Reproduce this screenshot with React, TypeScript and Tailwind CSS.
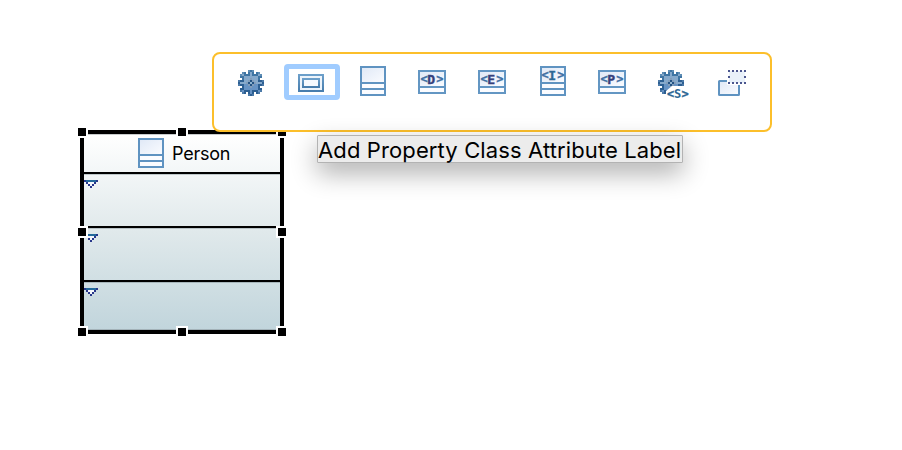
import type { ReactNode } from 'react';

const GEAR = [
  '.....s#s.....',
  '..s#.#o#.#s..',
  '.so###o###os.',
  '.##ooooooo##.',
  '..#ooolooo#..',
  's##oolmloo##s',
  '#ooolm.mlooo#',
  's##oolmloo##s',
  '..#ooolooo#..',
  '.##ooooooo##.',
  '.so###o###os.',
  '..s#.#o#.#s..',
  '.....s#s.....',
];

function gearFill(c: string, row: number) {
  if (c === '#') return row < 5 ? '#3f75a3' : '#2d5f92';
  if (c === 's') return row < 5 ? '#5d8db5' : '#4c7aa8';
  if (c === 'm') return '#235384';
  if (c === 'l') return '#829dba';
  if (c === '.') return '#8fb4d2';
  return row < 7 ? '#86a9cb' : '#6793c4';
}

function GearPixels() {
  return (
    <g shapeRendering="crispEdges">
      {GEAR.flatMap((line, r) =>
        line.split('').map((c, k) =>
          c === '.' && !(r === 6 && k === 6) ? null : (
            <rect key={`${r}-${k}`} x={2 + k * 2} y={4 + r * 2} width="2" height="2" fill={gearFill(c, r)} />
          ),
        ),
      )}
    </g>
  );
}

function Glyph({ children }: { children: ReactNode }) {
  return (
    <svg className="block h-8 w-8 shrink-0 overflow-visible" viewBox="0 0 32 32">
      <defs>
        <linearGradient id="pane" x1="0" y1="0" x2="1" y2="1">
          <stop offset="0" stopColor="#dfe8f6" />
          <stop offset="1" stopColor="#fbfcff" />
        </linearGradient>
        <linearGradient id="frame" x1="0" y1="0" x2="0" y2="1">
          <stop offset="0" stopColor="#6c9fca" />
          <stop offset="1" stopColor="#477dad" />
        </linearGradient>
      </defs>
      {children}
    </svg>
  );
}

function Tag({ letter, y, color }: { letter: string; y: number; color: string }) {
  return (
    <text
      x="4.6 11.3 20.2"
      y={y}
      fontSize="13.5"
      fontWeight="700"
      fill={color}
      className="font-['DejaVu_Sans','Liberation_Sans',sans-serif]"
    >
      <tspan fontSize="12" fill="#3f6fa3" stroke="#3f6fa3" strokeWidth=".3" className="font-['DejaVu_Sans_Mono',monospace]" dy="-.8">{'<'}</tspan>
      <tspan fontSize="13" dy=".8" className="font-['DejaVu_Sans_Mono',monospace]" stroke={color} strokeWidth=".4">{letter}</tspan>
      <tspan fontSize="12" fill="#3f6fa3" stroke="#3f6fa3" strokeWidth=".3" className="font-['DejaVu_Sans_Mono',monospace]" dy="-.8">{'>'}</tspan>
    </text>
  );
}

function ClassGlyph({ letter }: { letter?: string }) {
  return (
    <Glyph>
      <rect x="5" y="1" width="24" height="28" fill="#fbfcff" />
      <rect x="5" y="1" width="24" height="16" fill="url(#pane)" />
      <path d="M5 1H29V29H5ZM5 17H29M5 23H29" fill="none" stroke="#5f93c1" strokeWidth="2" />
      {letter && (
        <g transform="translate(1 0)">
          <Tag letter={letter} y={14} color="#2d6794" />
        </g>
      )}
    </Glyph>
  );
}

function TypeGlyph({ letter }: { letter: string }) {
  return (
    <Glyph>
      <rect x="3" y="5" width="26" height="22" fill="#fbfcff" />
      <rect x="3" y="5" width="26" height="16" fill="url(#pane)" />
      <path d="M3 5H29V27H3ZM3 21H29" fill="none" stroke="#6396c3" strokeWidth="2" />
      <Tag letter={letter} y={18} color="#36407c" />
    </Glyph>
  );
}

function StereotypeGlyph() {
  return (
    <Glyph>
      <GearPixels />
      <path d="M16 20H34V33H10V25Z" fill="#fff" />
      <text
        x="11 18 25.5"
        y="31.5"
        fontSize="12"
        fontWeight="700"
        fill="#2d6794"
        className="font-['DejaVu_Sans_Mono',monospace]"
      >
        <tspan stroke="#2d6794" strokeWidth=".3">{'<'}</tspan>
        <tspan>S</tspan>
        <tspan stroke="#2d6794" strokeWidth=".3">{'>'}</tspan>
      </text>
    </Glyph>
  );
}

function PropertyGlyph() {
  return (
    <Glyph>
      <rect x="3" y="9" width="24" height="16" fill="#edf4fb" stroke="url(#frame)" strokeWidth="2" />
      <rect x="7" y="13" width="16" height="8" fill="#f6faff" stroke="url(#frame)" strokeWidth="2" />
    </Glyph>
  );
}

function DuplicateGlyph() {
  return (
    <Glyph>
      <rect x="3" y="15" width="20" height="14" rx=".5" fill="url(#pane)" stroke="#5f93c1" strokeWidth="2" />
      <rect x="11" y="3" width="20" height="16" fill="#fff" />
      <rect x="13" y="5" width="16" height="12" fill="#e9f1fa" />
      <path
        d="M12 5H30M12 17H30"
        stroke="#4a558e"
        strokeWidth="2"
        strokeDasharray="2 2 2 2 2 2 2 2"
      />
      <path d="M12 11H14M28 11H30M28 5H30M28 17H30" stroke="#4a558e" strokeWidth="2" />
    </Glyph>
  );
}

const TOOLS: { name: string; glyph: ReactNode }[] = [
  { name: 'gear', glyph: <Glyph><GearPixels /></Glyph> },
  { name: 'property', glyph: <PropertyGlyph /> },
  { name: 'class', glyph: <ClassGlyph /> },
  { name: 'datatype', glyph: <TypeGlyph letter="D" /> },
  { name: 'enumeration', glyph: <TypeGlyph letter="E" /> },
  { name: 'interface', glyph: <ClassGlyph letter="I" /> },
  { name: 'primitive', glyph: <TypeGlyph letter="P" /> },
  { name: 'stereotype', glyph: <StereotypeGlyph /> },
  { name: 'duplicate', glyph: <DuplicateGlyph /> },
];

function Toggle() {
  return (
    <svg className="block h-2 w-3.5" viewBox="0 0 7 4" shapeRendering="crispEdges">
      <path d="M1 1H6V2H5V3H2V2H1Z" fill="#f4f7fc" />
      <path d="M1 0H6V1H1Z" fill="#236a9c" />
      <path d="M0 0H1V1H0ZM6 0H7V1H6ZM1 1H2V2H1ZM5 1H6V2H5ZM2 2H3V3H2ZM4 2H5V3H4ZM3 3H4V4H3Z" fill="#28378b" />
    </svg>
  );
}

const HANDLES = [
  'left-[-8px] top-[-8px]',
  'left-[92px] top-[-8px]',
  'left-[192px] top-[-8px]',
  'left-[-8px] top-[92px]',
  'left-[192px] top-[92px]',
  'left-[-8px] top-[192px]',
  'left-[92px] top-[192px]',
  'left-[192px] top-[192px]',
];

function ClassNode() {
  return (
    <div className="absolute left-[80px] top-[130px] flex h-[204px] w-[204px] flex-col border-4 border-black bg-linear-to-b from-white via-[#e0e9eb] to-[#c1d5dc]">
      <div className="flex h-10 items-center gap-1.5 border-b-2 border-black pl-[50px] pt-0.5 shadow-[inset_0_1px_0_#c8cccd]">
        <ClassGlyph />
        <span className="font-['Inter',sans-serif] text-[18px] leading-none tracking-[-0.25px] text-black">Person</span>
      </div>
      <div className="h-[54px] border-b-2 border-black pt-1.5 shadow-[inset_0_1px_0_#bfc9cb]"><Toggle /></div>
      <div className="h-[54px] border-b-2 border-black pt-1.5 shadow-[inset_0_1px_0_#b6c1c5]"><Toggle /></div>
      <div className="flex-1 pt-1.5 shadow-[inset_0_1px_0_#a8b7bc,inset_0_-1px_0_#a3b2b8]"><Toggle /></div>
      {HANDLES.map((place) => (
        <i key={place} className={`absolute h-3 w-3 border-2 border-white bg-black ${place}`} />
      ))}
    </div>
  );
}

export default function App() {
  return (
    <main className="relative h-[450px] w-[902px] overflow-hidden bg-white">
      <ClassNode />
      <div className="absolute left-[212px] top-[52px] flex h-20 w-[560px] items-start gap-1 rounded-lg border-2 border-[#fcbf2b] bg-white p-2.5">
        {TOOLS.map((tool) => (
          <div
            key={tool.name}
            className={`flex h-9 w-14 shrink-0 items-center justify-center ${
              tool.name === 'property' ? 'rounded border-[5px] border-[#a0ccff]' : ''
            }`}
          >
            {tool.glyph}
          </div>
        ))}
      </div>
      <div className="absolute left-[317px] top-[135px] flex h-7 w-[366px] items-center rounded-[1px] border border-[#b3b3b3] bg-[#ececec] pt-0.5 shadow-[0_10px_26px_rgba(0,0,0,0.32)]">
        <span className="whitespace-nowrap font-['Inter',sans-serif] text-[22px] leading-none tracking-[0.12px] text-black">
          Add Property Class Attribute Label
        </span>
      </div>
    </main>
  );
}
